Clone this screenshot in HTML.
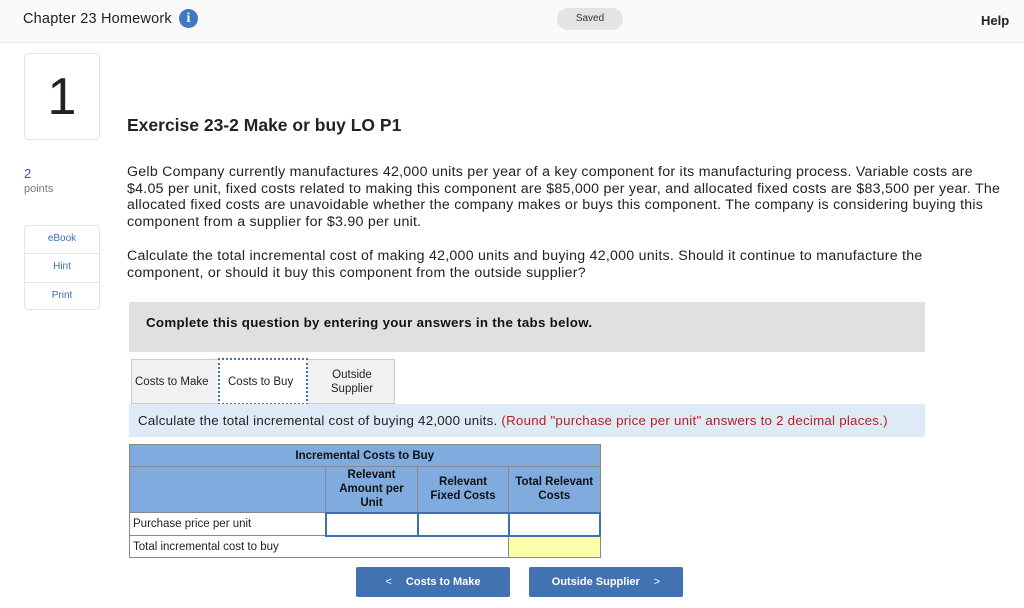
<!DOCTYPE html>
<html><head><meta charset="utf-8"><style>
*{margin:0;padding:0;box-sizing:border-box}
body{width:1024px;height:608px;background:#fff;font-family:"Liberation Sans",sans-serif;position:relative;overflow:hidden;color:#222}
.a{position:absolute}
.hdr{left:0;top:0;width:1024px;height:43px;background:#fafafa;border-bottom:1px solid #e8e8e8}
.p{font-size:14.2px;letter-spacing:.25px;line-height:16.7px;white-space:nowrap;color:#222}
td{border:1px solid #888;font-size:11.5px}
.th{background:#7fabdf;font-weight:bold;text-align:center;color:#111}
.btn{background:#4272b2;color:#fff;font-weight:bold;font-size:11px;border-radius:2px;text-align:center;line-height:30px;height:30px}
</style></head><body>
<div class="a hdr"></div>
<div class="a" style="left:23px;top:11px;font-size:14.5px;color:#222;letter-spacing:.2px">Chapter 23 Homework</div>
<div class="a" style="left:179px;top:9px;width:19px;height:19px;border-radius:50%;background:#3e79c4;color:#fff;font:bold 14px 'Liberation Serif',serif;text-align:center;line-height:19px">i</div>
<div class="a" style="left:557px;top:8px;width:66px;height:22px;border-radius:11px;background:#e4e4e6;font-size:10px;text-align:center;line-height:22px;color:#333">Saved</div>
<div class="a" style="left:981px;top:13px;font-size:13px;font-weight:bold;color:#222">Help</div>
<div class="a" style="left:24px;top:53px;width:76px;height:87px;border:1px solid #e4e4e4;border-radius:4px;text-align:center;font-size:52px;line-height:87px;color:#222">1</div>
<div class="a" style="left:24px;top:166px;font-size:13px;color:#2d5d9e">2</div>
<div class="a" style="left:24px;top:183px;font-size:11px;color:#777">points</div>
<div class="a" style="left:24px;top:225px;width:76px;height:85px;border:1px solid #e4e4e4;border-radius:4px"></div>
<div class="a" style="left:25px;top:253px;width:74px;border-top:1px solid #e4e4e4"></div>
<div class="a" style="left:25px;top:282px;width:74px;border-top:1px solid #e4e4e4"></div>
<div class="a" style="left:24px;top:233px;width:76px;text-align:center;font-size:10px;color:#3b6fb6">eBook</div>
<div class="a" style="left:24px;top:261px;width:76px;text-align:center;font-size:10px;color:#3b6fb6">Hint</div>
<div class="a" style="left:24px;top:290px;width:76px;text-align:center;font-size:10px;color:#3b6fb6">Print</div>
<div class="a" style="left:127px;top:115px;font-size:17.5px;font-weight:bold;color:#222">Exercise 23-2 Make or buy LO P1</div>
<div class="a p" style="left:127px;top:164px">Gelb Company currently manufactures 42,000 units per year of a key component for its manufacturing process. Variable costs are<br>$4.05 per unit, fixed costs related to making this component are $85,000 per year, and allocated fixed costs are $83,500 per year. The<br>allocated fixed costs are unavoidable whether the company makes or buys this component. The company is considering buying this<br>component from a supplier for $3.90 per unit.</div>
<div class="a p" style="left:127px;top:248px">Calculate the total incremental cost of making 42,000 units and buying 42,000 units. Should it continue to manufacture the<br>component, or should it buy this component from the outside supplier?</div>
<div class="a" style="left:129px;top:302px;width:796px;height:50px;background:#e0e0e0"></div>
<div class="a" style="left:146px;top:315px;font-size:13.3px;font-weight:bold;color:#111;letter-spacing:.3px">Complete this question by entering your answers in the tabs below.</div>
<div class="a" style="left:131px;top:359px;width:264px;height:45px;border:1px solid #ccc;background:#f1f1f1"></div>
<div class="a" style="left:218px;top:358px;width:90px;height:47px;border:2px dotted #3b6fb6;background:#fff"></div>
<div class="a" style="left:135px;top:376px;font-size:11.5px">Costs to Make</div>
<div class="a" style="left:228px;top:376px;font-size:11.5px">Costs to Buy</div>
<div class="a" style="left:308px;top:368px;width:88px;text-align:center;font-size:11.5px;line-height:14px">Outside<br>Supplier</div>
<div class="a" style="left:129px;top:404px;width:796px;height:33px;background:#deebf7"></div>
<div class="a" style="left:138px;top:413px;font-size:13.3px;letter-spacing:.25px;white-space:nowrap">Calculate the total incremental cost of buying 42,000 units. <span style="color:#b22222">(Round "purchase price per unit" answers to 2 decimal places.)</span></div>
<table class="a" style="left:129px;top:444px;width:472px;border-collapse:collapse">
<tr style="height:22px"><td class="th" colspan="4">Incremental Costs to Buy</td></tr>
<tr style="height:46px"><td class="th" style="width:196px"></td><td class="th" style="width:92px;line-height:14px">Relevant<br>Amount per<br>Unit</td><td class="th" style="width:91px;line-height:14px">Relevant<br>Fixed Costs</td><td class="th" style="line-height:14px">Total Relevant<br>Costs</td></tr>
<tr style="height:23px"><td style="padding-left:3px">Purchase price per unit</td><td style="border:2px solid #3b6fb6"></td><td style="border:2px solid #3b6fb6"></td><td style="border:2px solid #3b6fb6"></td></tr>
<tr style="height:22px"><td colspan="3" style="padding-left:3px">Total incremental cost to buy</td><td style="background:#ffffaa"></td></tr>
</table>
<div class="a btn" style="left:356px;top:567px;width:154px"><span style="font-weight:normal;margin-right:14px">&lt;</span>Costs to Make</div>
<div class="a btn" style="left:529px;top:567px;width:154px">Outside Supplier<span style="font-weight:normal;margin-left:14px">&gt;</span></div>
</body></html>
